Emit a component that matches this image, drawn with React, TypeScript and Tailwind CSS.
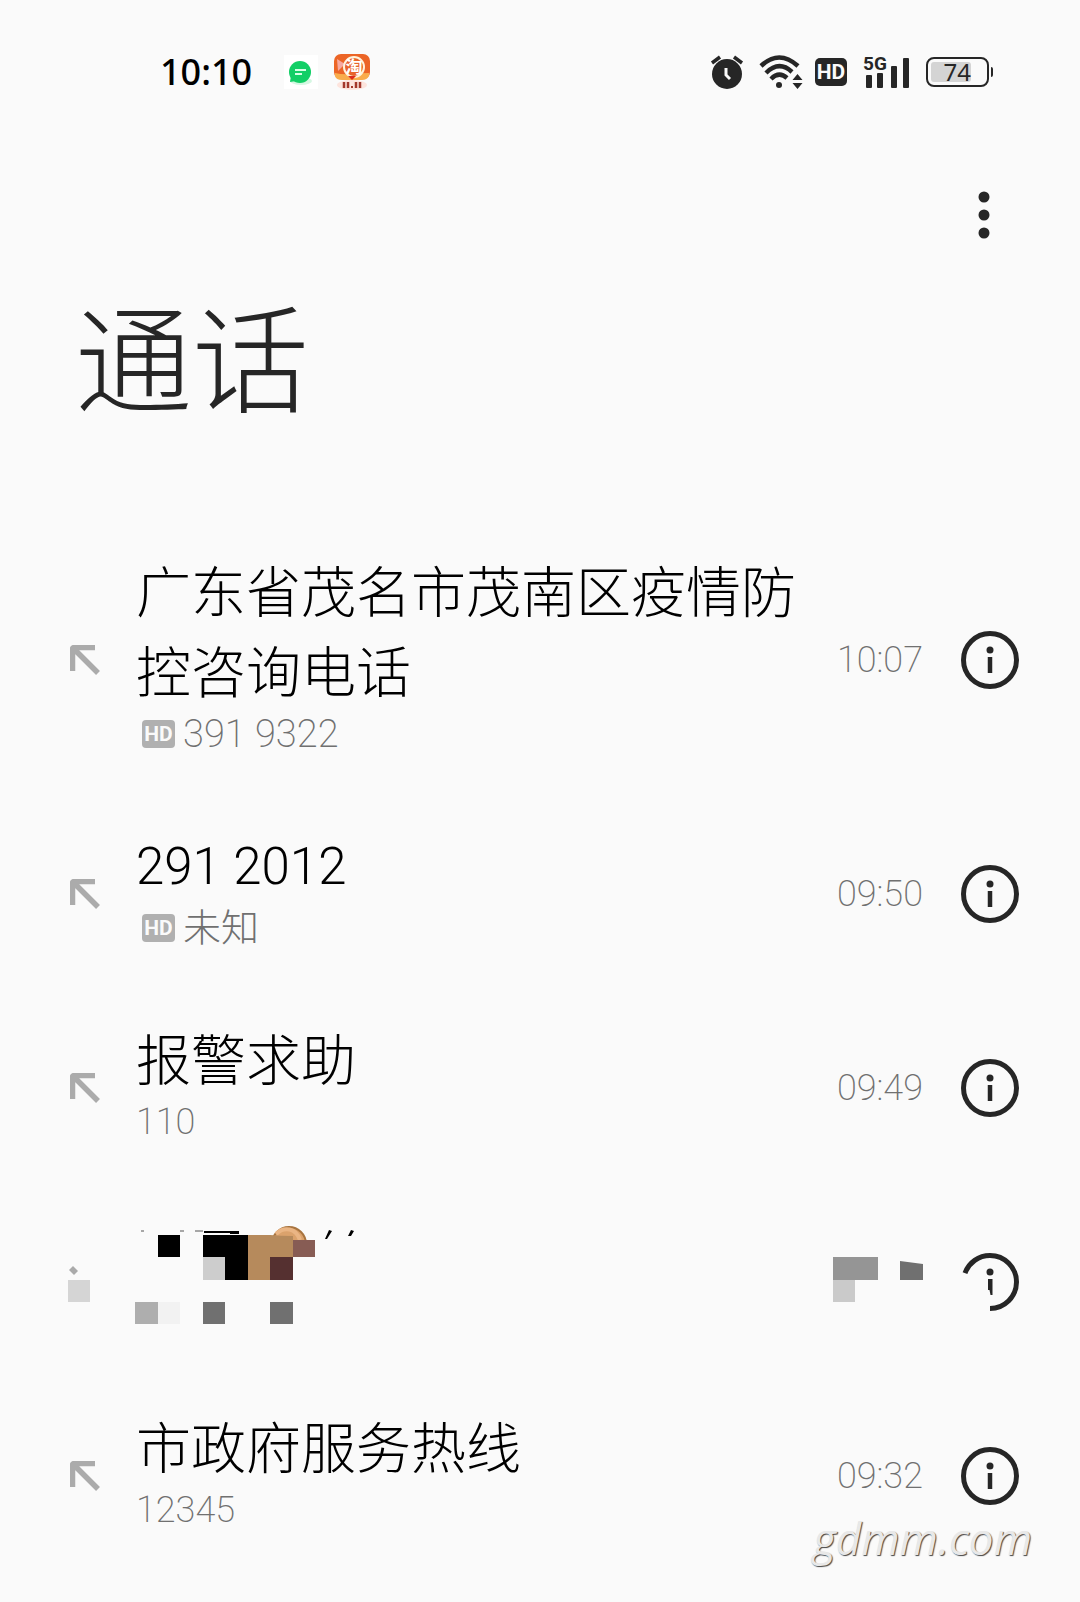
import { clsx } from "clsx";

type Call = {
  id: number;
  name: string;
  detail: string;
  time: string;
  hd?: boolean;
};

const recentCalls: Call[] = [
  {
    id: 1,
    name: "广东省茂名市茂南区疫情防控咨询电话",
    detail: "391 9322",
    time: "10:07",
    hd: true,
  },
  { id: 2, name: "291 2012", detail: "未知", time: "09:50", hd: true },
  { id: 3, name: "报警求助", detail: "110", time: "09:49" },
];

const hotline: Call = {
  id: 5,
  name: "市政府服务热线",
  detail: "12345",
  time: "09:32",
};

const App = () => {
  return (
    <div className="relative min-h-screen bg-[#fafafa] font-['Roboto','Noto_Sans_CJK_SC',sans-serif] text-[#262626]">
      <StatusBar />
      <header className="pr-[71px] pl-[75px]">
        <div className="flex justify-end pt-[94px]">
          <button type="button" aria-label="更多">
            <MoreDots />
          </button>
        </div>
        <h1 className="mt-[39px] text-[117px] leading-[170px] font-light">
          通话
        </h1>
      </header>
      <main className="mt-[74px]">
        <ul>
          {recentCalls.map((call) => (
            <CallRow key={call.id} call={call} />
          ))}
          <HiddenRow />
          <CallRow call={hotline} />
        </ul>
      </main>
      <p className="absolute right-[48px] bottom-[36px] font-['Open_Sans',sans-serif] text-[44px] leading-[56px] text-[#e8e8e8] italic [text-shadow:1px_1px_1px_#444]">
        gdmm.com
      </p>
    </div>
  );
};

export default App;

function StatusBar() {
  return (
    <div className="flex items-center justify-between pt-[48px] pr-[87px] pl-[160px]">
      <div className="flex h-[48px] items-center">
        <span className="font-['Noto_Sans',sans-serif] text-[36px] leading-[48px] font-medium text-black">
          10:10
        </span>
        <MessageIcon />
        <TaobaoIcon />
      </div>
      <div className="flex h-[48px] items-center">
        <AlarmIcon />
        <WifiIcon />
        <HdBadge className="ml-[12px] h-[28px] w-[32px] rounded-[5px] bg-[#262626]" />
        <SignalIcon />
        <BatteryIcon />
      </div>
    </div>
  );
}

function HdBadge({ className }: { className: string }) {
  return (
    <span
      className={clsx(
        "flex items-center justify-center text-[21px] leading-none font-bold text-[#fafafa]",
        className,
      )}
    >
      HD
    </span>
  );
}

function CallRow({ call }: { call: Call }) {
  return (
    <li className="flex items-center py-[30px] pr-[61px] pl-[70px]">
      <IncomingArrow />
      <div className="ml-[36px] min-w-0 flex-1 pb-[12px]">
        <p
          className={clsx(
            "max-w-[670px] leading-[80px] font-light text-black",
            /^\d/.test(call.name) ? "text-[51px]" : "text-[55px]",
          )}
        >
          {call.name}
        </p>
        <p
          className={clsx(
            "flex items-center leading-[42px] font-extralight text-[#707070]",
            call.hd ? "text-[38px]" : "text-[36px]",
          )}
        >
          {call.hd && (
            <HdBadge className="mr-[8px] ml-[6px] h-[28px] w-[33px] rounded-[4px] bg-[#b0b0b0]" />
          )}
          {call.detail}
        </p>
      </div>
      <time className="mr-[38px] text-[36px] leading-[42px] font-extralight text-[#707070]">
        {call.time}
      </time>
      <button type="button" aria-label={`${call.name} 详情`}>
        <InfoIcon />
      </button>
    </li>
  );
}

// Entry whose name, number and time are covered by mosaic blocks
function HiddenRow() {
  return (
    <li className="flex h-[194px] items-center pr-[61px] pl-[68px]">
      <svg width="32" height="62" viewBox="0 0 32 62" aria-hidden="true">
        <path d="M1 19l4-4 5 5-4 4z" fill="#aaa" />
        <path d="M0 29h22v22H0z" fill="#d5d5d5" />
      </svg>
      <svg
        className="ml-[35px]"
        width="225"
        height="122"
        viewBox="0 0 225 122"
        aria-hidden="true"
      >
        <path d="M6 10h3M45 10h4M60 10h8" stroke="#555" strokeWidth="1" />
        <path d="M69 10h35v3h-9v-1H69z" fill="#000" />
        <circle cx="154" cy="23" r="17" fill="#dba26c" stroke="#a8743f" strokeWidth="2" />
        <path d="M141 13c8-8 20-6 24 6" stroke="#eab584" strokeWidth="4" fill="none" />
        <path d="M23 14h22v22H23zM68 14h45v45H90V36H68z" fill="#000" />
        <path d="M113 14h22q11 1 23 1v21h-23v23h-22z" fill="#b68a5c" />
        <path d="M158 19h22v17h-22z" fill="#875c54" />
        <path d="M135 36h23v23h-23z" fill="#553030" />
        <path d="M158 36h22v12h-22z" fill="#fafafa" />
        <path d="M68 36h22v23H68z" fill="#cdcdcd" />
        <path d="M0 81h23v22H0z" fill="#aeaeae" />
        <path d="M23 81h22v22H23z" fill="#f2f2f2" />
        <path d="M68 81h22v22H68zM135 81h23v22h-23z" fill="#707070" />
        <path d="M194 9l3 1-5 8h-2zM216 9l3 1-3 5h-3z" fill="#000" />
      </svg>
      <div className="flex-1" />
      <svg width="90" height="50" viewBox="0 0 90 50" aria-hidden="true">
        <path d="M0 0h45v23H0z" fill="#959595" />
        <path d="M0 23h22v22H0z" fill="#cacaca" />
        <path d="M67 4l23 3v16H67z" fill="#707070" />
      </svg>
      <button type="button" aria-label="详情" className="ml-[38px]">
        <svg width="58" height="58" viewBox="0 0 58 58" fill="none">
          <path
            d="M4 20.200A26.500 26.500 0 0 1 29 2.500A26.500 26.500 0 0 1 29 55.500"
            stroke="#262626"
            strokeWidth="5"
          />
          <circle cx="29" cy="19" r="3.500" fill="#262626" />
          <path d="M27 26h4.500v16h-2l-1-5h-1.500z" fill="#262626" />
        </svg>
      </button>
    </li>
  );
}

function MoreDots() {
  return (
    <svg width="50" height="50" viewBox="0 0 50 50" fill="#262626">
      <circle cx="25" cy="7" r="5.500" />
      <circle cx="25" cy="25" r="5.500" />
      <circle cx="25" cy="43" r="5.500" />
    </svg>
  );
}

function IncomingArrow() {
  return (
    <svg width="30" height="30" viewBox="0 0 30 30" fill="none" aria-label="来电">
      <path
        d="M2.500 26V4.500Q2.500 2.500 4.500 2.500H25M3.500 3.500L28 28"
        stroke="#ababab"
        strokeWidth="5.500"
      />
    </svg>
  );
}

function InfoIcon() {
  return (
    <svg width="58" height="58" viewBox="0 0 58 58" fill="none">
      <circle cx="29" cy="29" r="26.500" stroke="#262626" strokeWidth="5" />
      <circle cx="29" cy="19" r="3.500" fill="#262626" />
      <path d="M26.750 26h4.500v16h-4.500z" fill="#262626" />
    </svg>
  );
}

function MessageIcon() {
  return (
    <svg className="ml-[32px]" width="34" height="34" viewBox="0 0 34 34">
      <path d="M0 0h34v34H0z" fill="#fff" />
      <ellipse cx="17" cy="26" rx="11" ry="4" fill="#d5f7e2" />
      <circle cx="16" cy="17" r="11" fill="#12cf66" />
      <path d="M7 21l-1 6 6-1z" fill="#12cf66" />
      <path d="M11 15h11M11 19h7" stroke="#d6ffe6" strokeWidth="2" />
    </svg>
  );
}

function TaobaoIcon() {
  return (
    <svg className="ml-[15px]" width="38" height="38" viewBox="0 0 38 38">
      <rect x="1" y="1" width="36" height="25" rx="7" fill="#ec6526" />
      <path d="M2 20q8 2 17 1t17-1v3q-2 4-7 4H9q-6 0-7-4z" fill="#f9ad4c" />
      <path d="M4 6l8 5-7 7z" fill="#f6a9a0" />
      <circle cx="21" cy="14" r="10" fill="#e8642c" stroke="#fff3dc" strokeWidth="2" />
      <text
        x="21"
        y="20"
        fontSize="17"
        fontWeight="700"
        textAnchor="middle"
        fill="#fff"
        fontFamily="Noto Sans CJK SC, sans-serif"
      >
        淘
      </text>
      <path d="M15 23h8l-4 4z" fill="#dd2c1c" />
      <ellipse cx="19" cy="32" rx="15" ry="5" fill="#fde4dd" />
      <path
        d="M11 29v6M15 29v6M23 29v6M27 29v6"
        stroke="#a3382c"
        strokeWidth="2.500"
      />
      <path d="M18 33h2v2h-2z" fill="#a3382c" />
    </svg>
  );
}

function AlarmIcon() {
  return (
    <svg width="34" height="36" viewBox="0 0 34 36" fill="none">
      <circle cx="17" cy="20" r="15" fill="#262626" />
      <path d="M2 9l8-6M32 9l-8-6" stroke="#262626" strokeWidth="3.500" />
      <path d="M16 14v7l4 4" stroke="#fafafa" strokeWidth="3" />
    </svg>
  );
}

function WifiIcon() {
  return (
    <svg className="ml-[15px]" width="44" height="36" viewBox="0 0 44 36" fill="none">
      <path
        d="M2 12Q20-5 39 12M7 19Q20 6 33 18M12 25Q20 17 28 24"
        stroke="#262626"
        strokeWidth="4.500"
      />
      <circle cx="20" cy="31" r="3" fill="#262626" />
      <path d="M38.500 20l5 6h-10zM38.500 35l5-6h-10z" fill="#262626" />
    </svg>
  );
}

function SignalIcon() {
  return (
    <svg className="ml-[15px]" width="49" height="44" viewBox="0 -3 49 44" fill="#262626">
      <text
        x="1"
        y="17"
        fontSize="19"
        fontWeight="700"
        fontFamily="Roboto, sans-serif"
      >
        5G
      </text>
      <rect x="4" y="22" width="6" height="13" rx="1" />
      <rect x="15" y="20" width="6" height="15" rx="1" />
      <rect x="29" y="13" width="6" height="22" rx="1" />
      <rect x="41" y="5" width="6" height="30" rx="1" />
    </svg>
  );
}

function BatteryIcon() {
  return (
    <div className="ml-[15px] flex items-center gap-[2px]">
      <div className="flex h-[30px] w-[63px] rounded-[8px] border-2 border-[#262626] p-[3px]">
        <div className="flex h-[20px] w-[40px] items-center justify-end rounded-[3px] bg-[#d4d4d4] font-['Noto_Sans',sans-serif] text-[24px] leading-none">
          74
        </div>
      </div>
      <div className="h-[10px] w-[2px] rounded-r-sm bg-[#262626]" />
    </div>
  );
}
